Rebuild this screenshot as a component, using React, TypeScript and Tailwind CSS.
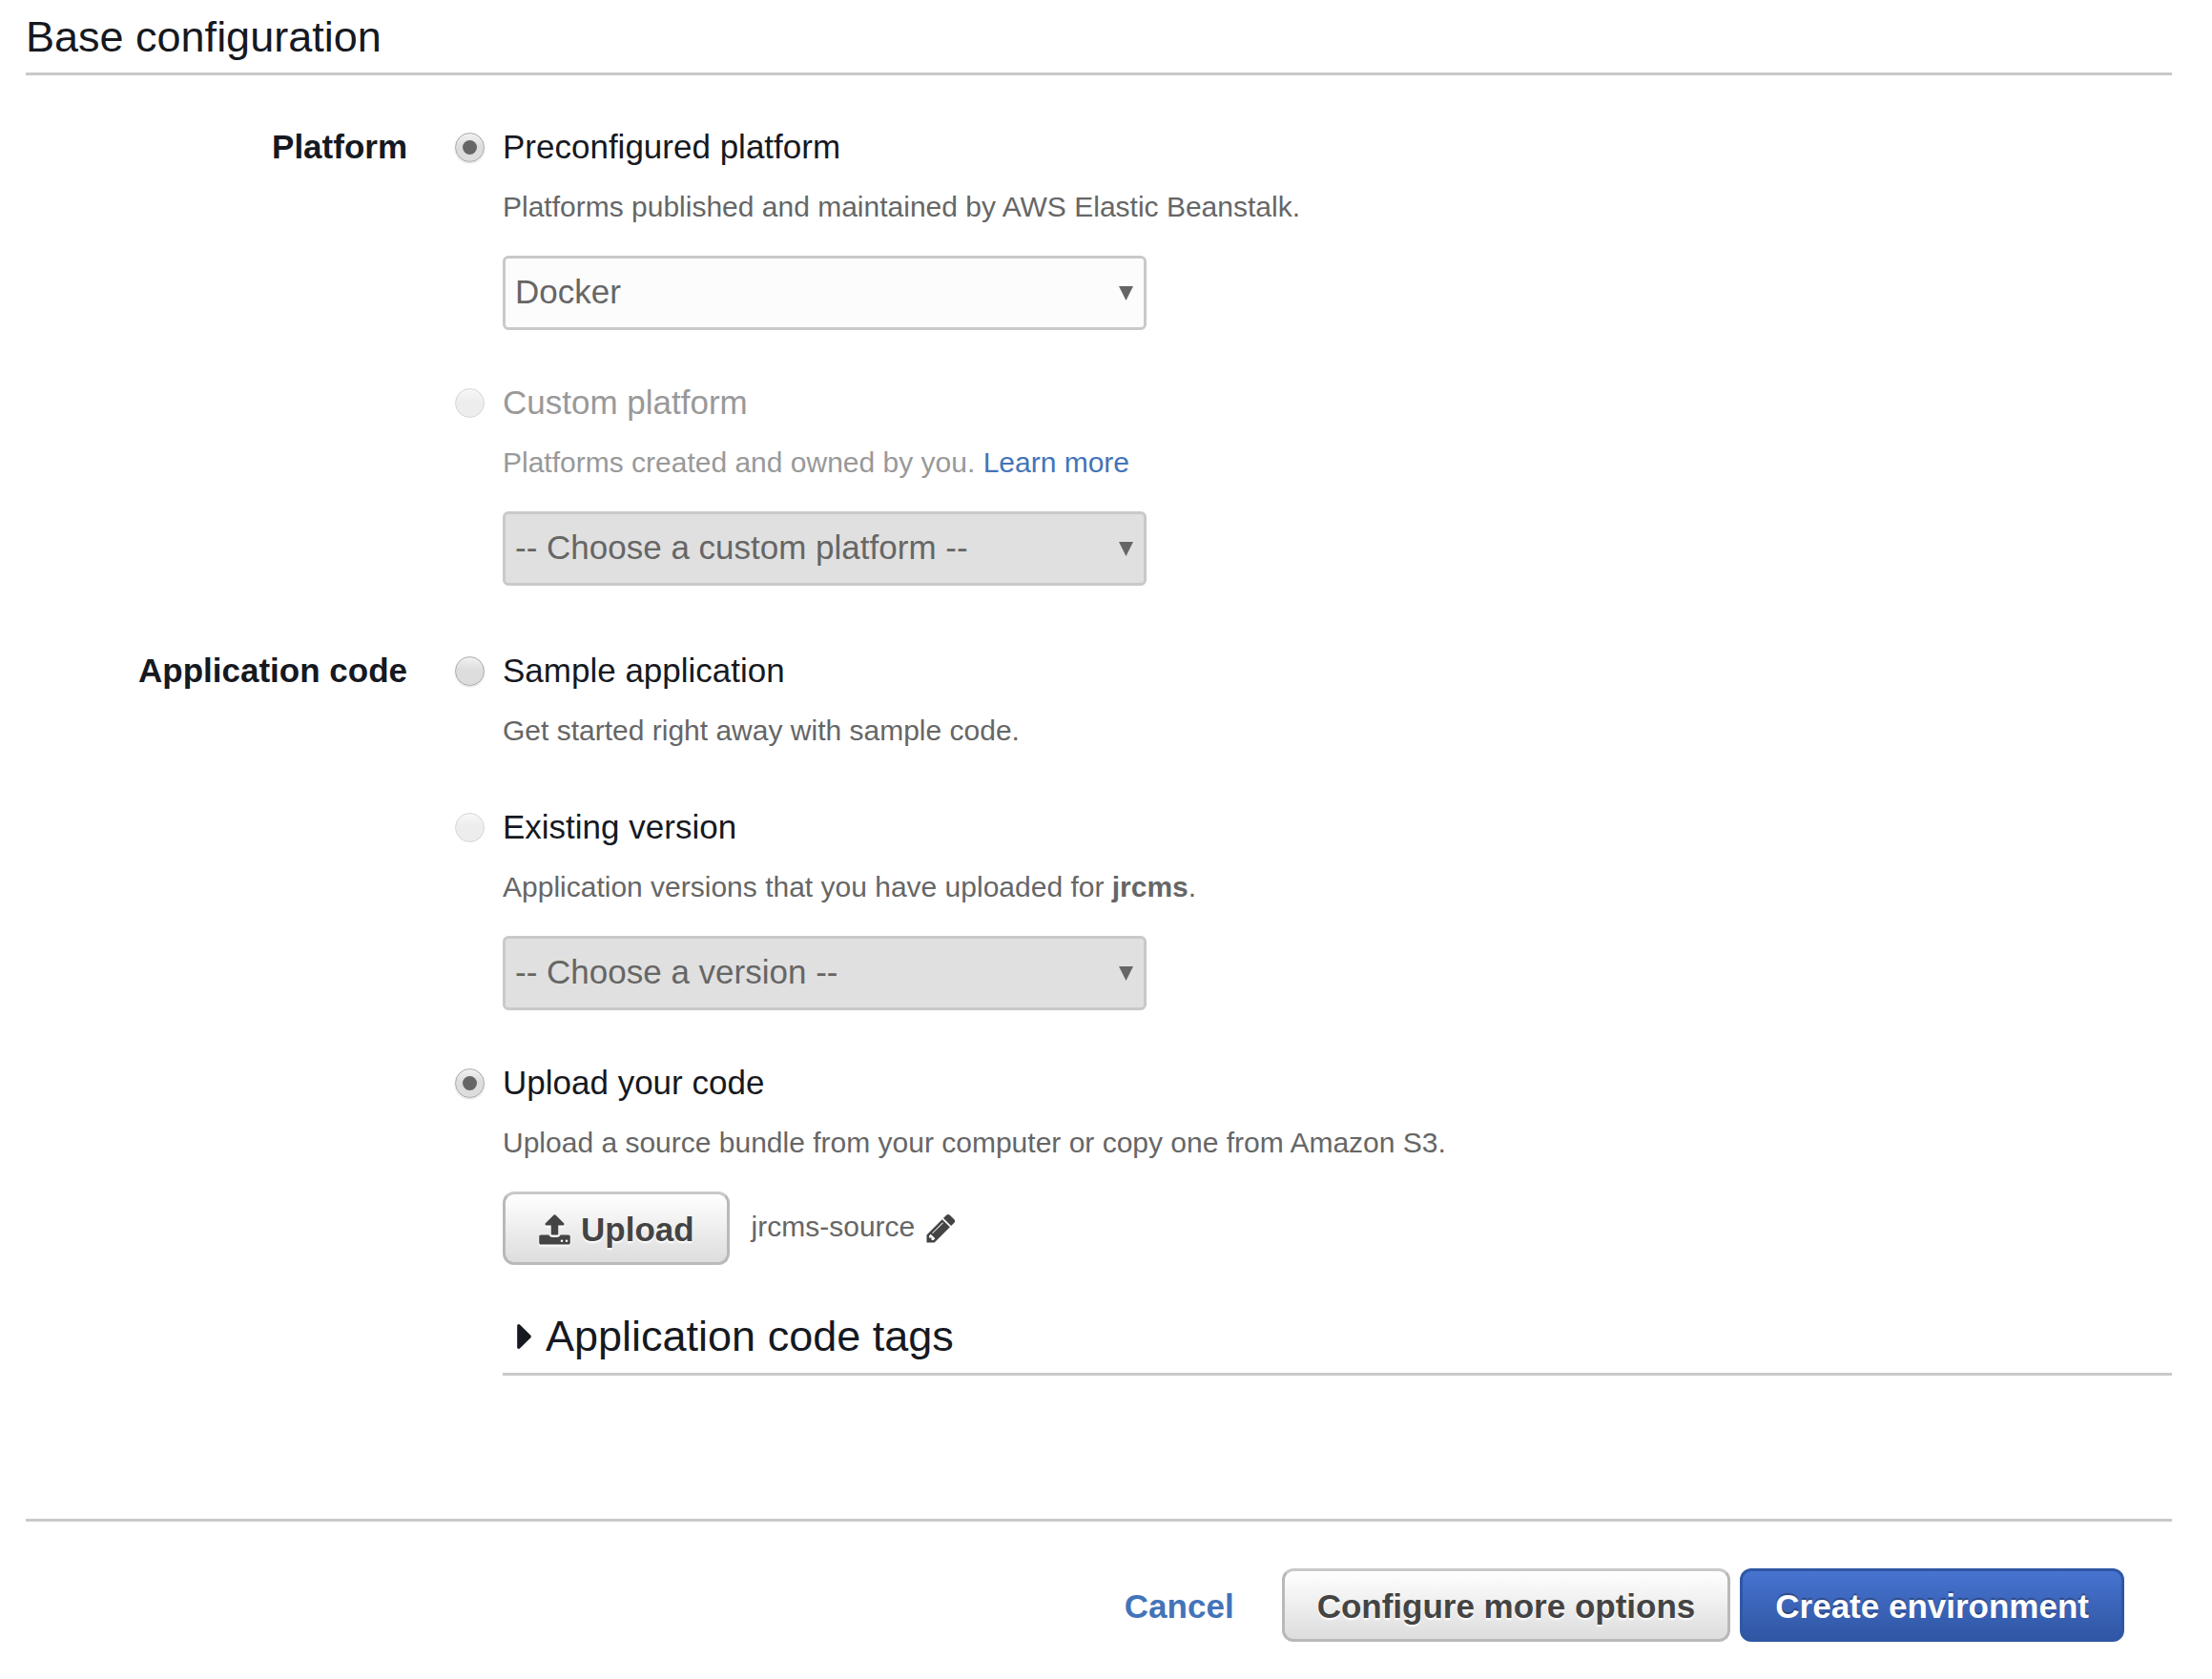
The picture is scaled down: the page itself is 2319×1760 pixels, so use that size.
import { useState, type ReactNode } from 'react';

const UPLOAD_PATH =
  'M1344 1472q0-26-19-45t-45-19-45 19-19 45 19 45 45 19 45-19 19-45zm256 0q0-26-19-45t-45-19-45 19-19 45 19 45 45 19 45-19 19-45zm128-224v320q0 40-28 68t-68 28h-1472q-40 0-68-28t-28-68v-320q0-40 28-68t68-28h427q21 56 70.5 92t110.5 36h256q61 0 110.5-36t70.5-92h427q40 0 68 28t28 68zm-325-648q-17 40-59 40h-256v448q0 26-19 45t-45 19h-256q-26 0-45-19t-19-45v-448h-256q-42 0-59-40-17-39 14-69l448-448q18-19 45-19t45 19l448 448q31 30 14 69z';
const PENCIL_PATH =
  'M491 1536l91-91-235-235-91 91v107h128v128h107zm523-928q0-22-22-22-10 0-17 7l-542 542q-7 7-7 17 0 22 22 22 10 0 17-7l542-542q7-7 7-17zm-54-192l416 416-832 832h-416v-416zm683 96q0 53-37 90l-166 166-416-416 166-165q36-38 90-38 53 0 91 38l235 234q37 39 37 91z';
const CARET_PATH =
  'M1152 896q0 26-19 45l-448 448q-19 19-45 19t-45-19-19-45v-896q0-26 19-45t45-19 45 19l448 448q19 19 19 45z';

type OptionProps = {
  id: string;
  group: string;
  label: string;
  description: ReactNode;
  checked?: boolean;
  disabled?: boolean;
  muted?: boolean;
  onSelect?: () => void;
  children?: ReactNode;
};

function RadioOption({ id, group, label, description, checked = false, disabled, muted, onSelect, children }: OptionProps) {
  return (
    <div className="grid grid-cols-[31px_minmax(0,1fr)] gap-x-[19px]">
      <input
        type="radio"
        id={id}
        name={group}
        checked={checked}
        disabled={disabled}
        onChange={() => onSelect?.()}
        className="grid size-[31px] appearance-none place-content-center self-center rounded-full border border-[#aaa] bg-linear-to-b from-[#f2f2f2] to-[#ddd] to-45% shadow-[0_1px_2px_rgba(0,0,0,0.15)] before:size-[15px] before:rounded-full before:content-[''] checked:before:bg-[#666] disabled:opacity-50 disabled:shadow-none"
      />
      <label htmlFor={id} className={muted ? 'text-[35px] leading-[50px] text-[#999]' : 'text-[35px] leading-[50px]'}>
        {label}
      </label>
      <div className="col-start-2">
        <p className={muted ? 'mt-[13px] text-[30px] leading-[50px] text-[#999]' : 'mt-[13px] text-[30px] leading-[50px] text-[#666]'}>
          {description}
        </p>
        {children && <div className="mt-[26px]">{children}</div>}
      </div>
    </div>
  );
}

function SelectBox({ label, options, disabled }: { label: string; options: string[]; disabled?: boolean }) {
  return (
    <div className="relative w-full max-w-[675px]">
      <select
        aria-label={label}
        disabled={disabled}
        className="h-[78px] w-full appearance-none rounded-md border-[3px] border-[#c9c9c9] bg-[#fcfcfc] pr-[50px] pb-0.5 pl-2.5 text-[35px] text-[#666] disabled:bg-[#e0e0e0] disabled:text-[#666] disabled:opacity-100"
      >
        {options.map((option) => (
          <option key={option}>{option}</option>
        ))}
      </select>
      <svg viewBox="0 0 15 15" aria-hidden="true" className="pointer-events-none absolute top-8 right-3.5 size-[15px] fill-[#666]">
        <path d="M0 0h15L7.5 15z" />
      </svg>
    </div>
  );
}

function FormRow({ id, title, children }: { id: string; title: string; children: ReactNode }) {
  return (
    <section role="radiogroup" aria-labelledby={id} className="grid grid-cols-[400px_minmax(0,1fr)] gap-x-[50px]">
      <h3 id={id} className="text-right text-[35px] leading-[50px] font-bold">
        {title}
      </h3>
      <div className="flex flex-col gap-[51px]">{children}</div>
    </section>
  );
}

const buttonBase = 'flex h-[77px] items-center rounded-xl border-[3px] px-[34px] pt-[3px] text-[35px] font-bold';
const greyButton =
  'border-[#b9b9b9] border-t-[#c9c9c9] bg-linear-to-b from-white to-[#ddd] text-[#444] [text-shadow:0_2px_2px_#fff]';
const blueButton =
  'border-[#2f57a5] bg-linear-to-b from-[#4774d0] to-[#3056a4] text-white [text-shadow:0_-2px_1px_rgba(0,0,0,0.3)]';

export default function App() {
  const [source, setSource] = useState('upload');

  return (
    <main className="bg-white pt-[9px] pr-[42px] pb-[39px] pl-[27px] font-['Liberation_Sans',Arial,sans-serif] text-[#16191f]">
      <h2 className="border-b-[3px] border-[#c9c9c9] pb-[7px] text-[45px] leading-[60px]">Base configuration</h2>

      <form className="mt-[50px]" onSubmit={(event) => event.preventDefault()}>
        <div className="flex flex-col gap-[64px]">
          <FormRow id="platform" title="Platform">
            <RadioOption
              id="preconfigured"
              group="platform"
              label="Preconfigured platform"
              description="Platforms published and maintained by AWS Elastic Beanstalk."
              checked
            >
              <SelectBox label="Preconfigured platform" options={['Docker']} />
            </RadioOption>
            <RadioOption
              id="custom"
              group="platform"
              label="Custom platform"
              description={
                <>
                  Platforms created and owned by you.{' '}
                  <a href="#learn-more" className="text-[#4374b9]">
                    Learn more
                  </a>
                </>
              }
              disabled
              muted
            >
              <SelectBox label="Custom platform" options={['-- Choose a custom platform --']} disabled />
            </RadioOption>
          </FormRow>

          <FormRow id="application-code" title="Application code">
            <RadioOption
              id="sample"
              group="source"
              label="Sample application"
              description="Get started right away with sample code."
              checked={source === 'sample'}
              onSelect={() => setSource('sample')}
            />
            <RadioOption
              id="existing"
              group="source"
              label="Existing version"
              description={
                <>
                  Application versions that you have uploaded for <b>jrcms</b>.
                </>
              }
              disabled
            >
              <SelectBox label="Existing version" options={['-- Choose a version --']} disabled />
            </RadioOption>
            <RadioOption
              id="upload"
              group="source"
              label="Upload your code"
              description="Upload a source bundle from your computer or copy one from Amazon S3."
              checked={source === 'upload'}
              onSelect={() => setSource('upload')}
            >
              <div className="flex items-center">
                <button type="button" className={`${buttonBase} ${greyButton} gap-2.5`}>
                  <svg viewBox="0 0 1792 1792" aria-hidden="true" className="size-[35px] fill-current drop-shadow-[0_2px_1px_#fff]">
                    <path d={UPLOAD_PATH} />
                  </svg>
                  Upload
                </button>
                <span className="ml-[23px] pb-1 text-[30px] leading-[50px] text-[#666]">jrcms-source</span>
                <button type="button" aria-label="Edit source" className="ml-2.5">
                  <svg viewBox="0 0 1792 1792" aria-hidden="true" className="size-[35px] fill-[#444]">
                    <path d={PENCIL_PATH} />
                  </svg>
                </button>
              </div>
              <h2 className="mt-[45px] border-b-[3px] border-[#c9c9c9] pb-2 text-[45px] leading-[60px]">
                <button type="button" aria-expanded="false" className="flex items-center gap-[15px] pl-[15px]">
                  <svg viewBox="576 384 576 1024" aria-hidden="true" className="h-[26px] w-[15px] fill-current">
                    <path d={CARET_PATH} />
                  </svg>
                  Application code tags
                </button>
              </h2>
            </RadioOption>
          </FormRow>
        </div>

        <footer className="mt-[150px] flex items-center justify-end border-t-[3px] border-[#c9c9c9] pt-[49px] pr-[50px]">
          <a href="#cancel" className="mr-[50px] pt-[3px] text-[35px] font-bold text-[#4374b9]">
            Cancel
          </a>
          <button type="button" className={`${buttonBase} ${greyButton} mr-2.5`}>
            Configure more options
          </button>
          <button type="submit" className={`${buttonBase} ${blueButton}`}>
            Create environment
          </button>
        </footer>
      </form>
    </main>
  );
}
